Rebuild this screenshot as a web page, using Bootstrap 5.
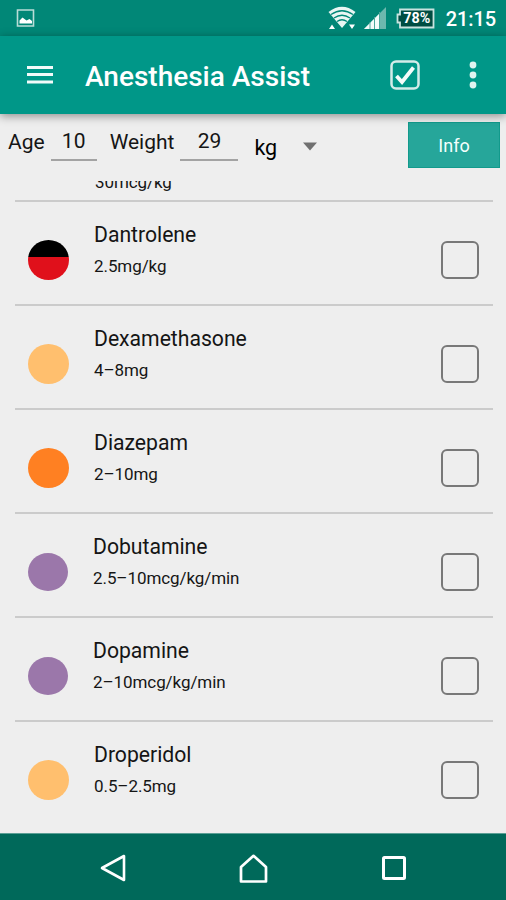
<!DOCTYPE html>
<html lang="en">
<head>
<meta charset="utf-8">
<meta name="viewport" content="width=device-width, initial-scale=1">
<title>Anesthesia Assist</title>
<link rel="stylesheet" href="https://cdn.jsdelivr.net/npm/bootstrap@5.3.0/dist/css/bootstrap.min.css">
<style>
body{font-family:Roboto,"Liberation Sans",sans-serif;background:#eee;color:#151515;height:900px;width:506px}
svg{display:block;flex:none}
.statusbar{height:36px;background:#018777;padding:0 10px 0 16px}
.clock{font-size:20px;font-weight:500;line-height:36px;letter-spacing:-.1px;margin-left:11px;padding-top:2px}
.battery{margin-left:10px}
.appbar{height:78px;background:#009788;padding:0 29px 0 27px;box-shadow:0 2px 9px rgba(0,0,0,.42);z-index:2}
.app-title{font-size:28px;font-weight:500;line-height:78px;padding-top:4px;margin-left:32px}
.menu-dots{margin-left:49px}
.params{height:67px;padding:8px 6px 0 8px;font-size:21px;line-height:24px}
.params label{padding-top:8px}
.field{height:39px;padding-top:7px;border-bottom:2px solid #a3a3a3;text-align:center}
.field-age{width:46px;margin-left:6px;margin-right:13px}
.field-weight{width:58px;margin-left:6px;margin-right:16px}
.unit{padding-top:14px;color:#000;font-size:21.5px}
.caret{margin:20px 0 0 26px}
.info-btn{width:92px;height:46px;background:#26a69a;border:1px solid #129a8c;border-radius:0;color:#f4fffd;font-size:18px;line-height:24px;padding:1px 0 0}
.drugs{height:652px;padding:0 13px 0 15px}
.drug{height:104px;border-bottom:2px solid #cbcbcb;padding:18px 14px 0 13px}
.drug-last{border:0}
.drug-cut{height:21px;padding:0 0 0 80px}
.drug-name{font-size:21.2px;line-height:28px;letter-spacing:-.02px;padding-top:1px}
.drug-dose{font-size:17px;line-height:22px;letter-spacing:-.08px;margin-top:6px}
.drug-cut .drug-dose{margin-top:-10px}
.dot{width:41px;height:40px;border-radius:50%;margin-top:20px;margin-right:25px}
.dot-split{background:linear-gradient(#000 43%,#e0101b 43%)}
.dot-peach{background:#ffbf6e}
.dot-orange{background:#ff8022}
.dot-purple{background:#9b77aa;width:40px;height:38px;margin-top:21px}
.tick{width:38px;height:38px;border:2.5px solid #787878;border-radius:6px;margin-top:21px}
.navkeys{height:67px;background:#00695a;border-top:1px solid #5b9f95;padding:2px 99px 0 100px}
</style>
<script src="https://cdn.jsdelivr.net/npm/bootstrap@5.3.0/dist/js/bootstrap.bundle.min.js"></script>
</head>
<body class="d-flex flex-column overflow-hidden">
<div class="statusbar d-flex align-items-center text-white">
  <svg width="19" height="18" viewBox="0 0 19 18"><path d="M1.500 1h16v16h-16z" fill="none" stroke="#b9ddd7" stroke-width="1.600"/><path d="M3.500 14.500v-3l3-3 4 3 3-1.500 2.500 2v2.500z" fill="#fff"/></svg>
  <svg class="ms-auto" width="28" height="24" viewBox="0 0 28 24"><path d="M0.500 6Q14-4.500 27.500 6L14 22z" fill="#e9f6f3"/><g fill="none" stroke="#018777" stroke-width="1.300"><path d="M3 8.500Q14 1 25 8.500M6 12Q14 6.500 22 12M9 15.500Q14 12 19 15.500"/></g><path d="M1 23l3-4.500 3 4.500zM21 18.500h6l-3 4.500z" fill="#fff"/></svg>
  <svg class="ms-2" width="22" height="22" viewBox="0 0 22 22"><path d="M22 0v22H0z" fill="#6db8ae"/><path d="M15.500 6.500V22H0z" fill="#f4fbfa"/><path d="M6 15v7M10.500 10v12M15.500 5v17" stroke="#4ea99d" stroke-width="1"/></svg>
  <svg class="battery" width="39" height="21" viewBox="0 0 39 21"><path d="M4 1.500h33.500v18H4V14.500H1.500v-8H4z" fill="#004d42" stroke="#c9e3df" stroke-width="1.800"/><text x="20.800" y="15.400" text-anchor="middle" font-family="Roboto,sans-serif" font-size="14" font-weight="700" fill="#fff" textLength="27" lengthAdjust="spacingAndGlyphs">78%</text></svg>
  <span class="clock">21:15</span>
</div>
<header class="appbar d-flex align-items-center text-white position-relative">
  <svg width="26" height="20" viewBox="0 0 26 20"><path d="M0 2.500h26M0 9.500h26M0 17h26" stroke="#f2fbfa" stroke-width="3.200"/></svg>
  <span class="app-title">Anesthesia Assist</span>
  <svg class="ms-auto" width="30" height="30" viewBox="0 0 30 30"><rect x="1.500" y="1.500" width="27" height="27" rx="4.500" fill="none" stroke="#d3ece9" stroke-width="2.500"/><path d="M6.500 16l5.500 6L23.500 7.500" fill="none" stroke="#f5fcfb" stroke-width="3.800"/></svg>
  <svg class="menu-dots" width="8" height="28" viewBox="0 0 8 28"><g fill="#e0f3f0"><circle cx="4" cy="4" r="3.400"/><circle cx="4" cy="14" r="3.400"/><circle cx="4" cy="24" r="3.400"/></g></svg>
</header>
<section class="params d-flex align-items-start flex-shrink-0">
  <label>Age</label><div class="field field-age">10</div>
  <label>Weight</label><div class="field field-weight">29</div>
  <span class="unit">kg</span>
  <svg class="caret" width="14" height="9" viewBox="0 0 14 9"><path d="M0 .5h14L7 8.500z" fill="#707070"/></svg>
  <button class="btn info-btn ms-auto">Info</button>
</section>
<main class="drugs d-flex flex-column overflow-hidden flex-shrink-0">
  <div class="drug drug-cut overflow-hidden flex-shrink-0"><div class="drug-dose">30mcg/kg</div></div>
  <div class="drug d-flex flex-shrink-0"><i class="dot dot-split"></i><div><div class="drug-name">Dantrolene</div><div class="drug-dose">2.5mg/kg</div></div><i class="tick ms-auto"></i></div>
  <div class="drug d-flex flex-shrink-0"><i class="dot dot-peach"></i><div><div class="drug-name">Dexamethasone</div><div class="drug-dose">4–8mg</div></div><i class="tick ms-auto"></i></div>
  <div class="drug d-flex flex-shrink-0"><i class="dot dot-orange"></i><div><div class="drug-name">Diazepam</div><div class="drug-dose">2–10mg</div></div><i class="tick ms-auto"></i></div>
  <div class="drug d-flex flex-shrink-0"><i class="dot dot-purple"></i><div><div class="drug-name">Dobutamine</div><div class="drug-dose">2.5–10mcg/kg/min</div></div><i class="tick ms-auto"></i></div>
  <div class="drug d-flex flex-shrink-0"><i class="dot dot-purple"></i><div><div class="drug-name">Dopamine</div><div class="drug-dose">2–10mcg/kg/min</div></div><i class="tick ms-auto"></i></div>
  <div class="drug drug-last d-flex flex-shrink-0"><i class="dot dot-peach"></i><div><div class="drug-name">Droperidol</div><div class="drug-dose">0.5–2.5mg</div></div><i class="tick ms-auto"></i></div>
</main>
<nav class="navkeys d-flex align-items-center justify-content-between flex-shrink-0">
  <svg width="26" height="28" viewBox="0 0 26 28"><path d="M24 2v24L2 14z" fill="none" stroke="#fff" stroke-width="2.600" stroke-linejoin="round"/></svg>
  <svg width="29" height="29" viewBox="0 0 29 29"><path d="M2 27.500V13L14.500 1.800 27 13v14.500z" fill="none" stroke="#fff" stroke-width="2.700" stroke-linejoin="round"/></svg>
  <svg width="26" height="26" viewBox="0 0 26 26"><rect x="2.500" y="2.500" width="21" height="21" rx="1" fill="none" stroke="#fff" stroke-width="3"/></svg>
</nav>
</body>
</html>
